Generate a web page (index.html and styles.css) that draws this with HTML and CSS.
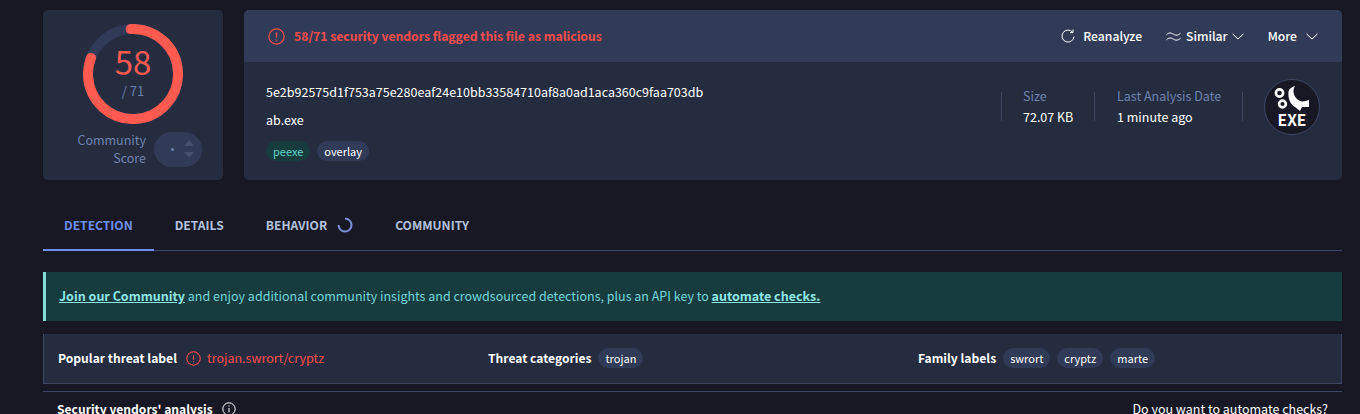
FILE: index.html
```html
<!DOCTYPE html>
<html lang="en">
<head>
  <meta charset="UTF-8">
  <title>ab.exe</title>
  <link rel="stylesheet" href="styles.css">
</head>
<body>
  <div class="page">

    <div class="top">
      <!-- score -->
      <div class="score-card">
        <div class="ring">
          <svg width="100" height="100" viewBox="0 0 100 100">
            <circle class="ring-bg" cx="50" cy="50" r="45"></circle>
            <circle class="ring-val" cx="50" cy="50" r="45" pathLength="71" stroke-dasharray="58 71" transform="rotate(-93 50 50)"></circle>
          </svg>
          <div class="ring-text">
            <div class="ring-num">58</div>
            <div class="ring-total">/ 71</div>
          </div>
        </div>
        <div class="community">
          <div class="community-label">Community<br>Score</div>
          <div class="vote">
            <span class="vote-dot"></span>
            <span class="vote-arrows">
              <svg width="10" height="6" viewBox="0 0 10 6"><path d="M5 0L10 6H0Z"></path></svg>
              <svg width="10" height="6" viewBox="0 0 10 6"><path d="M0 0H10L5 6Z"></path></svg>
            </span>
          </div>
        </div>
      </div>

      <!-- file info -->
      <div class="file-card">
        <div class="file-head">
          <div class="verdict">
            <svg class="alert" width="17" height="17" viewBox="0 0 17 17">
              <circle cx="8.5" cy="8.5" r="7.6"></circle>
              <path d="M8.5 4.5V9.8M8.5 11.6V12.8"></path>
            </svg>
            58/71 security vendors flagged this file as malicious
          </div>
          <div class="actions">
            <span class="action act-re">
              <svg width="14" height="14" viewBox="0 0 14 14"><path d="M11.6 3.2A6 6 0 1 0 13 7.6"></path><path d="M12 .6V3.6H9"></path></svg>
              Reanalyze
            </span>
            <span class="action act-sim">
              <svg width="15" height="9" viewBox="0 0 15 9"><path d="M.5 2.8C3 .2 5 .8 7.5 2.2S12 3.6 14.5 1.2"></path><path d="M.5 7.8C3 5.2 5 5.8 7.5 7.2S12 8.6 14.5 6.2"></path></svg>
              Similar
              <svg width="12" height="7" viewBox="0 0 12 7"><path d="M.5 .8L6 6L11.5 .8"></path></svg>
            </span>
            <span class="action act-more">
              More
              <svg width="12" height="7" viewBox="0 0 12 7"><path d="M.5 .8L6 6L11.5 .8"></path></svg>
            </span>
          </div>
        </div>

        <div class="file-body">
          <div class="file-main">
            <div class="hash">5e2b92575d1f753a75e280eaf24e10bb33584710af8a0ad1aca360c9faa703db</div>
            <div class="file-name">ab.exe</div>
            <div class="tags">
              <span class="tag tag-green">peexe</span>
              <span class="tag">overlay</span>
            </div>
          </div>
          <div class="stats">
            <div class="stat stat-size">
              <div class="stat-label">Size</div>
              <div class="stat-value">72.07 KB</div>
            </div>
            <div class="stat stat-date">
              <div class="stat-label">Last Analysis Date</div>
              <div class="stat-value">1 minute ago</div>
            </div>
            <div class="stat-end"></div>
          </div>
          <div class="exe-icon">
            <svg width="36" height="27" viewBox="0 0 36 27">
              <circle class="gear" cx="5.5" cy="8" r="3.6"></circle>
              <circle class="gear" cx="8.5" cy="19" r="3.4"></circle>
              <path class="wrench" d="M15 5C16 3 18 2 21 1C18 6 20 11 23 14C26 17 30 17 35 15V22H28L26 26L21 22C16 20 13 11 15 5Z"></path>
            </svg>
            <span class="exe-text">EXE</span>
          </div>
        </div>
      </div>
    </div>

    <div class="tabs">
      <div class="tab active">DETECTION</div>
      <div class="tab">DETAILS</div>
      <div class="tab">BEHAVIOR
        <svg class="spin" width="16" height="16" viewBox="0 0 16 16"><path d="M8 1.5A6.5 6.5 0 1 1 1.5 8"></path></svg>
      </div>
      <div class="tab">COMMUNITY</div>
    </div>

    <div class="banner">
      <a href="#">Join our Community</a> and enjoy additional community insights and crowdsourced detections, plus an API key to <a href="#">automate checks.</a>
    </div>

    <div class="labels">
      <div class="label-col">
        <b>Popular threat label</b>
        <svg class="alert alert-sm" width="15" height="15" viewBox="0 0 17 17">
          <circle cx="8.5" cy="8.5" r="7.6"></circle>
          <path d="M8.5 4.5V9.8M8.5 11.6V12.8"></path>
        </svg>
        <span class="threat">trojan.swrort/cryptz</span>
      </div>
      <div class="label-col">
        <b>Threat categories</b>
        <span class="tag">trojan</span>
      </div>
      <div class="label-col">
        <b>Family labels</b>
        <span class="tag">swrort</span>
        <span class="tag">cryptz</span>
        <span class="tag">marte</span>
      </div>
    </div>

    <div class="vendors">
      <div class="vendors-title">
        <b>Security vendors' analysis</b>
        <svg width="14" height="14" viewBox="0 0 14 14"><circle cx="7" cy="7" r="6.2"></circle><path d="M7 6V10.4M7 3.4V4.6"></path></svg>
      </div>
      <div class="vendors-link">Do you want to automate checks?</div>
    </div>

  </div>
</body>
</html>
```

FILE: styles.css
```css
*{
  box-sizing: border-box;
}

html, body{
  height: 414px;
  overflow: hidden;
}

body{
  margin: 0;
  background-color: #181825;
  color: #fff;
  font-family: "Noto Sans CJK JP", "Noto Sans", sans-serif;
  font-size: 12.5px;
  line-height: 18px;
}

b{
  font-size: 12.1px;
  font-weight: 700;
}

svg{
  display: block;
  flex: none;
}

.page{
  width: 1299px;
  margin-left: 43px;
  padding-top: 10px;
}

.top{
  display: flex;
  gap: 21px;
  height: 170px;
}

/* score */
.score-card{
  width: 180px;
  background-color: #252c40;
  border-radius: 5px;
  padding-top: 14px;
}

.ring{
  position: relative;
  width: 100px;
  height: 100px;
  margin-left: 40px;
}

.ring circle{
  fill: none;
  stroke-width: 10;
}

.ring-bg{
  stroke: #313b58;
}

.ring-val{
  stroke: #ff5a50;
  stroke-linecap: round;
}

.ring-text{
  position: absolute;
  left: 0;
  top: 0;
  width: 100%;
  text-align: center;
}

.ring-num{
  margin-top: 20px;
  font-size: 33px;
  line-height: 34px;
  color: #ff5a50;
}

.ring-total{
  margin-top: 4px;
  font-size: 13px;
  line-height: 18px;
  color: #6b7fa8;
}

.community{
  display: flex;
  align-items: center;
  margin-top: 7px;
  padding-left: 18px;
}

.community-label{
  width: 85px;
  text-align: right;
  line-height: 18px;
  color: #6f82ad;
}

.vote{
  display: flex;
  align-items: center;
  width: 48px;
  height: 35px;
  margin-left: 8px;
  border-radius: 18px;
  background-color: #313b58;
}

.vote-dot{
  width: 3px;
  height: 3px;
  margin-left: 17px;
  border-radius: 50%;
  background-color: #6f82ad;
}

.vote-arrows{
  display: flex;
  flex-direction: column;
  gap: 6px;
  margin-left: 10px;
}

.vote-arrows path{
  fill: #454f6e;
}

/* file */
.file-card{
  flex: 1;
  background-color: #252c40;
  border-radius: 5px;
  overflow: hidden;
}

.file-head{
  display: flex;
  justify-content: space-between;
  align-items: center;
  height: 52px;
  padding: 0 24px 0 24px;
  background-color: #313b58;
}

.verdict{
  display: flex;
  align-items: center;
  gap: 9px;
  font-size: 12.2px;
  font-weight: 700;
  color: #ff4b4b;
}

.alert circle{
  fill: none;
  stroke: #ff4b4b;
  stroke-width: 1.2;
}

.alert path{
  fill: none;
  stroke: #ff4b4b;
  stroke-width: 1.4;
}

.actions{
  display: flex;
  align-items: center;
}

.action{
  display: flex;
  align-items: center;
  font-size: 12.2px;
  font-weight: 500;
}

.action svg path{
  fill: none;
  stroke: #fff;
  stroke-width: 1;
}

.act-re svg{
  margin-right: 8px;
}

.act-sim{
  margin-left: 24px;
}

.act-sim svg:first-child{
  margin-right: 5px;
}

.act-sim svg:last-child{
  margin-left: 4px;
}

.act-more{
  margin-left: 24px;
}

.act-more svg{
  margin-left: 9px;
}

.file-body{
  display: flex;
  align-items: flex-start;
}

.file-main{
  flex: 1;
  padding: 21px 0 0 22px;
}

.file-name{
  margin-top: 10px;
}

.tags{
  display: flex;
  gap: 7px;
  margin-top: 12px;
}

.tag{
  display: inline-block;
  height: 20px;
  padding: 0 7px;
  border-radius: 10px;
  background-color: #313b58;
  font-size: 11px;
  line-height: 20px;
}

.tag-green{
  background-color: #173c40;
  color: #62d4c8;
}

.stats{
  display: flex;
  margin-top: 30px;
}

.stat{
  height: 29px;
  border-left: 1px solid #3d4764;
  padding-left: 21px;
  line-height: 21px;
}

.stat-size{
  width: 93px;
}

.stat-date{
  width: 148px;
  padding-left: 22px;
}

.stat-label{
  margin-top: -7px;
  color: #6f82ad;
  white-space: nowrap;
}

.stat-value{
  white-space: nowrap;
}

.stat-end{
  width: 1px;
  height: 29px;
  background-color: #3d4764;
}

.exe-icon{
  display: flex;
  flex-direction: column;
  align-items: center;
  width: 56px;
  height: 56px;
  margin: 17px 22px 0 21px;
  padding-top: 5px;
  border: 1px solid #3d4764;
  border-radius: 50%;
  background-color: #181825;
}

.gear{
  fill: none;
  stroke: #fff;
  stroke-width: 2.6;
}

.wrench{
  fill: #fff;
}

.exe-text{
  margin-top: -1px;
  font-size: 15.5px;
  line-height: 16px;
  font-weight: 700;
}

/* tabs */
.tabs{
  display: flex;
  height: 46px;
  margin-top: 25px;
  border-bottom: 1px solid #3d4a70;
}

.tab{
  display: flex;
  align-items: center;
  gap: 10px;
  height: 46px;
  padding: 0 21px 5px;
  font-size: 12.1px;
  font-weight: 700;
  color: #b4c1dc;
  border-bottom: 2px solid transparent;
}

.tab.active{
  color: #6e8fef;
  border-bottom-color: #6e8fef;
}

.spin{
  fill: none;
  stroke: #7b90d8;
  stroke-width: 2;
}

/* banner */
.banner{
  height: 49px;
  margin-top: 21px;
  padding-left: 13px;
  border-left: 3px solid #7fdcd8;
  background-color: #173c40;
  color: #73d6d8;
  line-height: 47px;
}

.banner a{
  color: #8fe6e4;
  font-weight: 700;
}

/* labels */
.labels{
  display: grid;
  grid-template-columns: repeat(3, 430px);
  height: 50px;
  margin-top: 13px;
  padding: 0 0 1px 14px;
  background-color: #252c40;
  border-left: 1px solid #3d4764;
  border-right: 1px solid #3d4764;
  border-bottom: 1px solid #3d4764;
}

.label-col{
  display: flex;
  align-items: center;
  gap: 7px;
}

.label-col .alert-sm{
  margin-left: 2px;
  margin-right: -1px;
}

.threat{
  color: #ff4b4b;
}

/* vendors */
.vendors{
  display: flex;
  justify-content: space-between;
  margin-top: 7px;
  padding: 8px 14px 0;
  border-top: 1px solid #3d4764;
}

.vendors-title{
  display: flex;
  align-items: center;
  gap: 9px;
}

.vendors-title svg *{
  fill: none;
  stroke: #fff;
  stroke-width: 1;
}
```
